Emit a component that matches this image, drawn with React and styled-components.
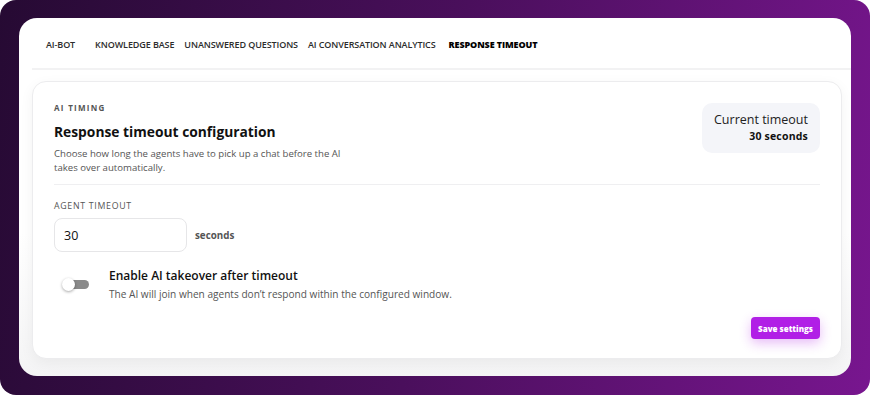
import React from "react";
import styled, { createGlobalStyle } from "styled-components";

const Global = createGlobalStyle`
  html, body { margin: 0; padding: 0; background: #ffffff; }
  body { font-family: "Open Sans", "Liberation Sans", sans-serif; }
  * { box-sizing: border-box; }
`;

const Frame = styled.div`
  width: 870px;
  height: 395px;
  border-radius: 16px;
  background: linear-gradient(100deg, #260a33 0%, #4a0f5c 50%, #78168f 100%);
  padding: 18px 19px 19px 19px;
  display: flex;
`;

const Card = styled.div`
  flex: 1;
  background: linear-gradient(180deg, #ffffff 0%, #ffffff 60%, #f4f4f5 100%);
  border-radius: 18px;
  display: flex;
  flex-direction: column;
  padding: 0 9px 17px 13px;
`;

const Tabs = styled.nav`
  display: flex;
  align-items: center;
  height: 52px;
  padding: 2px 0 0 14px;
  border-bottom: 2px solid #f2f2f3;
  margin-right: -9px;
`;

const Tab = styled.span`
  font-size: 9px;
  font-weight: ${(p) => (p.$active ? 800 : 600)};
  color: ${(p) => (p.$active ? "#000" : "#2c2c2c")};
  text-transform: uppercase;
  margin-right: ${(p) => p.$gap}px;
  white-space: nowrap;
  letter-spacing: -0.1px;
`;

const Panel = styled.section`
  flex: 1;
  margin-top: 11px;
  background: #fff;
  border: 1px solid #ececee;
  border-radius: 14px;
  box-shadow: 0 4px 14px rgba(0, 0, 0, 0.05);
  padding: 20px 21px 19px 21px;
  display: flex;
  flex-direction: column;
`;

const Header = styled.div`
  display: flex;
  justify-content: space-between;
  align-items: flex-start;
  padding-bottom: 10px;
  border-bottom: 1px solid #efeff1;
`;

const Eyebrow = styled.div`
  font-size: 8px;
  font-weight: 700;
  letter-spacing: 1.3px;
  color: #555;
  text-transform: uppercase;
`;

const Title = styled.h2`
  margin: 9px 0 0 0;
  font-size: 13.8px;
  font-weight: 700;
  color: #111;
`;

const Desc = styled.p`
  margin: 6px 0 0 0;
  width: 298px;
  font-size: 9.6px;
  line-height: 13.5px;
  color: #555;
`;

const Badge = styled.div`
  background: #f4f5f9;
  border-radius: 10px;
  padding: 9px 12px 9px 12px;
  text-align: right;
  margin-top: 1px;
`;

const BadgeLabel = styled.div`
  font-size: 12.5px;
  color: #222;
  line-height: 16px;
`;

const BadgeValue = styled.div`
  font-size: 10.5px;
  font-weight: 700;
  color: #111;
  line-height: 16px;
  letter-spacing: 0.2px;
`;

const FieldLabel = styled.div`
  margin-top: 15px;
  font-size: 8.8px;
  letter-spacing: 0.7px;
  color: #555;
  text-transform: uppercase;
`;

const InputRow = styled.div`
  display: flex;
  align-items: center;
  gap: 8px;
  margin-top: 6px;
`;

const Input = styled.input`
  width: 133px;
  height: 34px;
  border: 1px solid #e6e6e8;
  border-radius: 8px;
  padding: 0 9px;
  font-family: inherit;
  font-size: 12.5px;
  color: #111;
  outline: none;
`;

const Unit = styled.span`
  font-size: 9.8px;
  font-weight: 700;
  color: #555;
`;

const ToggleRow = styled.div`
  display: flex;
  align-items: flex-start;
  gap: 20px;
  margin-top: 16px;
  padding-left: 8px;
`;

const Switch = styled.div`
  position: relative;
  width: 27px;
  height: 13px;
  margin-top: 10px;
  flex-shrink: 0;
`;

const Track = styled.div`
  position: absolute;
  left: 4px;
  right: 0;
  top: 2px;
  height: 9px;
  border-radius: 5px;
  background: #8a8a8a;
`;

const Knob = styled.div`
  position: absolute;
  left: 0;
  top: 0;
  width: 13px;
  height: 13px;
  border-radius: 50%;
  background: #fff;
  box-shadow: 0 1px 3px rgba(0, 0, 0, 0.35);
`;

const ToggleTitle = styled.div`
  font-size: 12px;
  font-weight: 600;
  color: #111;
  line-height: 16px;
`;

const ToggleDesc = styled.div`
  margin-top: 3px;
  font-size: 10.1px;
  color: #555;
`;

const Footer = styled.div`
  margin-top: auto;
  display: flex;
  justify-content: flex-end;
`;

const SaveButton = styled.button`
  background: #b11fe6;
  color: #fff;
  border: none;
  border-radius: 4px;
  height: 22px;
  padding: 0 7px;
  font-family: inherit;
  font-size: 8px;
  font-weight: 800;
  box-shadow: 0 4px 12px rgba(177, 31, 230, 0.3);
`;

const tabs = [
  { label: "AI-BOT", gap: 20 },
  { label: "Knowledge Base", gap: 10 },
  { label: "Unanswered Questions", gap: 10 },
  { label: "AI Conversation Analytics", gap: 13 },
  { label: "Response Timeout", gap: 0, active: true },
];

export default function App() {
  return (
    <>
      <Global />
      <Frame>
        <Card>
          <Tabs>
            {tabs.map((t) => (
              <Tab key={t.label} $gap={t.gap} $active={t.active}>
                {t.label}
              </Tab>
            ))}
          </Tabs>
          <Panel>
            <Header>
              <div>
                <Eyebrow>AI Timing</Eyebrow>
                <Title>Response timeout configuration</Title>
                <Desc>
                  Choose how long the agents have to pick up a chat before the AI
                  takes over automatically.
                </Desc>
              </div>
              <Badge>
                <BadgeLabel>Current timeout</BadgeLabel>
                <BadgeValue>30 seconds</BadgeValue>
              </Badge>
            </Header>
            <FieldLabel>Agent timeout</FieldLabel>
            <InputRow>
              <Input defaultValue="30" />
              <Unit>seconds</Unit>
            </InputRow>
            <ToggleRow>
              <Switch>
                <Track />
                <Knob />
              </Switch>
              <div>
                <ToggleTitle>Enable AI takeover after timeout</ToggleTitle>
                <ToggleDesc>
                  The AI will join when agents don’t respond within the configured window.
                </ToggleDesc>
              </div>
            </ToggleRow>
            <Footer>
              <SaveButton>Save settings</SaveButton>
            </Footer>
          </Panel>
        </Card>
      </Frame>
    </>
  );
}
